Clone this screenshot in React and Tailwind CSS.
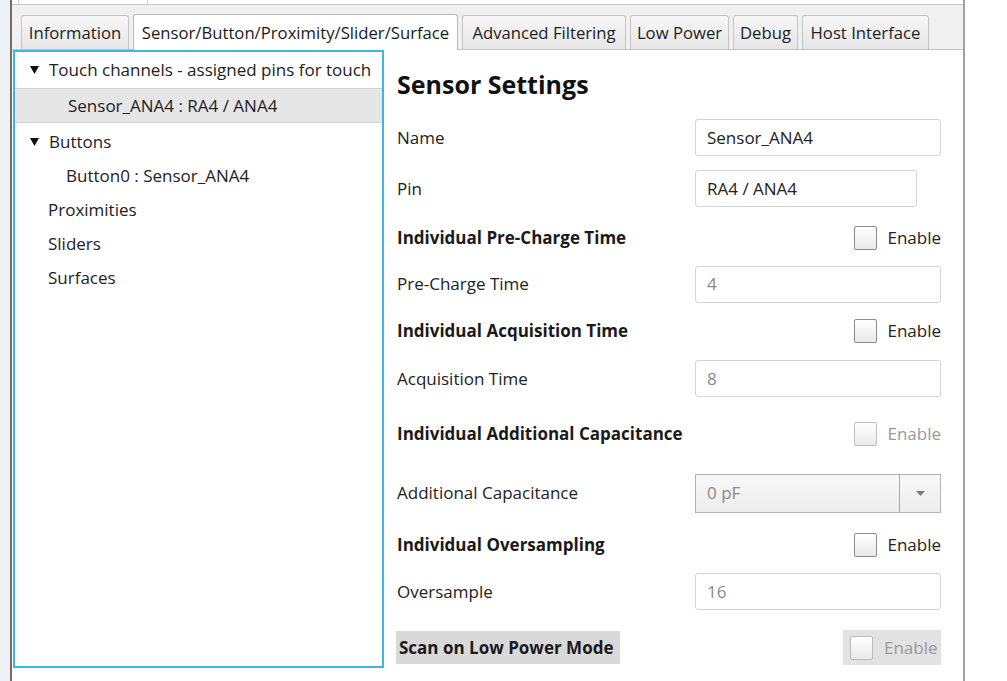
import React from 'react';

const font = { fontFamily: '"Open Sans", "Noto Sans", Arial, sans-serif' };

const tabs = [
  { label: 'Information', w: 'w-[108px]' },
  { label: 'Sensor/Button/Proximity/Slider/Surface', w: 'w-[325px]', active: true },
  { label: 'Advanced Filtering', w: 'w-[164px]' },
  { label: 'Low Power', w: 'w-[99px]' },
  { label: 'Debug', w: 'w-[65px]' },
  { label: 'Host Interface', w: 'w-[127px]' },
];

const Tab = ({ label, w, active }) => (
  <div
    className={`${w} flex items-center justify-center rounded-t-[3px] border border-b-0 text-[16.7px] whitespace-nowrap ${
      active
        ? 'h-[36px] -mb-px bg-white border-[#b9b9b9] text-[#1a1a1a] z-10'
        : 'h-[34px] bg-gradient-to-b from-[#f7f7f7] to-[#e6e6e6] border-[#c4c4c4] text-[#222]'
    }`}
  >
    {label}
  </div>
);

const Checkbox = ({ disabled }) => (
  <div
    className={`w-[23px] h-[24px] rounded-[2px] border bg-gradient-to-b from-white to-[#e9e9e9] ${
      disabled ? 'border-[#bdbdbd]' : 'border-[#8c8c8c]'
    }`}
  />
);

const EnableBox = ({ disabled }) => (
  <div className="ml-auto flex items-center gap-[10px]">
    <Checkbox disabled={disabled} />
    <span className={`text-[17px] ${disabled ? 'text-[#9a9a9a]' : 'text-[#222]'}`}>Enable</span>
  </div>
);

const Input = ({ value, muted, w = 'w-[246px]' }) => (
  <div
    className={`${w} h-[37px] flex items-center pl-[11px] rounded-[3px] border border-[#d4d4d4] bg-white text-[17px] ${
      muted ? 'text-[#8a8a8a]' : 'text-[#222]'
    }`}
  >
    {value}
  </div>
);

const Row = ({ h, label, bold, children }) => (
  <div className={`${h} flex items-center`}>
    <span className={`text-[17px] ${bold ? 'font-bold text-[#1a1a1a]' : 'text-[#222]'}`}>{label}</span>
    <div className="ml-auto w-[246px] flex justify-end">{children}</div>
  </div>
);

// small filled "expanded" arrow used in the tree
const Caret = () => (
  <svg width="9" height="8" viewBox="0 0 9 8" className="mr-[10px]">
    <path d="M0 0 H9 L4.5 8 Z" fill="#111" />
  </svg>
);

const TreeRow = ({ h, indent, arrow, selected, children }) => (
  <div
    className={`${h} flex items-center text-[17px] text-[#222] whitespace-nowrap ${
      selected ? 'bg-[#e6e6e6] border-y border-[#d2d2d2]' : ''
    } ${indent}`}
  >
    {arrow && <Caret />}
    {children}
  </div>
);

export default function App() {
  return (
    <div className="w-[1007px] h-[681px] bg-white flex overflow-hidden" style={font}>
      <div className="w-[12px] h-full bg-[#eef0f3] border-r-2 border-[#6e6e6e]" />
      <div className="w-[953px] h-full flex flex-col border-r-2 border-[#a2a2a2]">
        {/* top remnant */}
        <div className="h-[5px] flex border-b border-[#c8c8c8] bg-white">
          <div className="ml-[6px] w-[130px] border-x border-[#d0d0d0]" />
        </div>

        {/* tab strip */}
        <div className="h-[45px] flex items-end gap-[4px] pl-[9px] bg-[#f0f0f0] border-b border-[#c4c4c4]">
          {tabs.map(t => (
            <Tab key={t.label} {...t} />
          ))}
        </div>

        <div className="flex-1 flex">
          {/* tree */}
          <div className="w-[371px] h-[618px] ml-px border-2 border-[#3fb4e6] bg-white flex flex-col">
            <TreeRow h="h-[36px]" indent="pl-[15px]" arrow>Touch channels - assigned pins for touch</TreeRow>
            <TreeRow h="h-[35px]" indent="pl-[53px]" selected>Sensor_ANA4 : RA4 / ANA4</TreeRow>
            <div className="h-[2px]" />
            <TreeRow h="h-[34px]" indent="pl-[15px]" arrow>Buttons</TreeRow>
            <TreeRow h="h-[34px]" indent="pl-[51px]">Button0 : Sensor_ANA4</TreeRow>
            <TreeRow h="h-[34px]" indent="pl-[33px]">Proximities</TreeRow>
            <TreeRow h="h-[34px]" indent="pl-[33px]">Sliders</TreeRow>
            <TreeRow h="h-[34px]" indent="pl-[33px]">Surfaces</TreeRow>
          </div>

          {/* settings form */}
          <div className="flex-1 flex flex-col pl-[13px] pr-[22px]">
            <div className="h-[62px] pt-[8px] flex items-center">
              <h1 className="text-[25px] font-bold text-[#111]">Sensor Settings</h1>
            </div>
            <Row h="h-[51px]" label="Name">
              <Input value="Sensor_ANA4" />
            </Row>
            <Row h="h-[51px]" label="Pin">
              <div className="w-full">
                <Input value="RA4 / ANA4" w="w-[222px]" />
              </div>
            </Row>
            <Row h="h-[47px]" label="Individual Pre-Charge Time" bold>
              <EnableBox />
            </Row>
            <Row h="h-[46px]" label="Pre-Charge Time">
              <Input value="4" muted />
            </Row>
            <Row h="h-[48px]" label="Individual Acquisition Time" bold>
              <EnableBox />
            </Row>
            <Row h="h-[47px]" label="Acquisition Time">
              <Input value="8" muted />
            </Row>
            <Row h="h-[64px]" label="Individual Additional Capacitance" bold>
              <EnableBox disabled />
            </Row>
            <Row h="h-[54px]" label="Additional Capacitance">
              <div className="w-[246px] h-[39px] flex border border-[#b4b4b4] bg-gradient-to-b from-[#f8f8f8] to-[#ededed]">
                <div className="flex-1 flex items-center pl-[11px] text-[17px] text-[#8a8a8a]">0 pF</div>
                <div className="w-[41px] flex items-center justify-center border-l border-[#a8a8a8]">
                  <svg width="9" height="5" viewBox="0 0 9 5">
                    <path d="M0 0 H9 L4.5 5 Z" fill="#7a7a7a" />
                  </svg>
                </div>
              </div>
            </Row>
            <Row h="h-[49px]" label="Individual Oversampling" bold>
              <EnableBox />
            </Row>
            <Row h="h-[45px]" label="Oversample">
              <Input value="16" muted />
            </Row>
            <div className="h-[67px] flex items-center">
              <div className="h-[33px] -ml-px w-[224px] flex items-center pl-[3px] bg-[#d9d9d9] text-[17px] font-bold text-[#1a1a1a] whitespace-nowrap">
                Scan on Low Power Mode
              </div>
              <div className="ml-auto h-[35px] w-[98px] flex items-center gap-[11px] pl-[7px] bg-[#e2e2e2]">
                <Checkbox disabled />
                <span className="text-[17px] text-[#9a9a9a]">Enable</span>
              </div>
            </div>
          </div>
        </div>
      </div>
      <div className="flex-1 bg-white" />
    </div>
  );
}
